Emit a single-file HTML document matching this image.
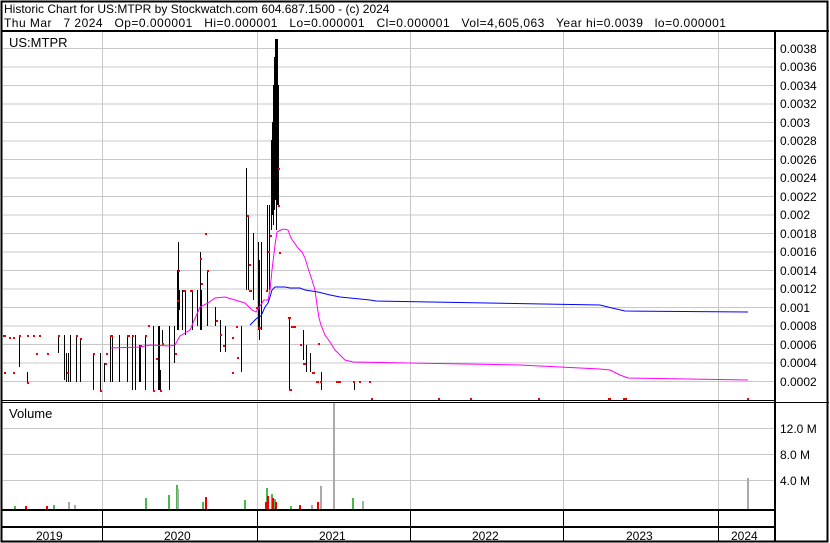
<!DOCTYPE html>
<html><head><meta charset="utf-8"><style>
html,body{margin:0;padding:0;background:#fff}
svg{display:block}
text{font-family:"Liberation Sans",Arial,sans-serif;font-size:12px;fill:#000}
.c{shape-rendering:crispEdges}
</style></head><body>
<svg width="830" height="543" viewBox="0 0 830 543" xmlns="http://www.w3.org/2000/svg">
<rect x="0" y="0" width="830" height="543" fill="#fff"/>
<g stroke="#c8c8c8" stroke-width="1" class="c">
<line x1="102.5" y1="32" x2="102.5" y2="509"/>
<line x1="257.5" y1="32" x2="257.5" y2="509"/>
<line x1="410.5" y1="32" x2="410.5" y2="509"/>
<line x1="563.5" y1="32" x2="563.5" y2="509"/>
<line x1="718.5" y1="32" x2="718.5" y2="509"/>
<line x1="3" y1="48.5" x2="774" y2="48.5"/><line x1="3" y1="67" x2="774" y2="67"/>
<line x1="3" y1="85.5" x2="774" y2="85.5"/><line x1="3" y1="104" x2="774" y2="104"/>
<line x1="3" y1="122.5" x2="774" y2="122.5"/><line x1="3" y1="141" x2="774" y2="141"/>
<line x1="3" y1="159.5" x2="774" y2="159.5"/><line x1="3" y1="178" x2="774" y2="178"/>
<line x1="3" y1="196.5" x2="774" y2="196.5"/><line x1="3" y1="215" x2="774" y2="215"/>
<line x1="3" y1="233.5" x2="774" y2="233.5"/><line x1="3" y1="252" x2="774" y2="252"/>
<line x1="3" y1="270.5" x2="774" y2="270.5"/><line x1="3" y1="289" x2="774" y2="289"/>
<line x1="3" y1="307.5" x2="774" y2="307.5"/><line x1="3" y1="326" x2="774" y2="326"/>
<line x1="3" y1="344.5" x2="774" y2="344.5"/><line x1="3" y1="363" x2="774" y2="363"/>
<line x1="3" y1="381.5" x2="774" y2="381.5"/>
<line x1="3" y1="428.5" x2="774" y2="428.5"/><line x1="3" y1="454.5" x2="774" y2="454.5"/>
<line x1="3" y1="480.5" x2="774" y2="480.5"/>
</g>
<g stroke="#000" stroke-width="1" class="c">
<line x1="19.5" y1="335" x2="19.5" y2="367"/><line x1="27.5" y1="372" x2="27.5" y2="382"/>
<line x1="58.5" y1="335" x2="58.5" y2="353"/><line x1="64.5" y1="335" x2="64.5" y2="380"/>
<line x1="66.5" y1="353" x2="66.5" y2="382"/><line x1="68.5" y1="353" x2="68.5" y2="382"/>
<line x1="70.5" y1="335" x2="70.5" y2="382"/><line x1="76.5" y1="335" x2="76.5" y2="382"/>
<line x1="80.5" y1="338" x2="80.5" y2="382"/><line x1="93.5" y1="353" x2="93.5" y2="390"/>
<line x1="100.5" y1="353" x2="100.5" y2="390"/><line x1="104.5" y1="363" x2="104.5" y2="382"/>
<line x1="110.5" y1="335" x2="110.5" y2="382"/><line x1="112.5" y1="335" x2="112.5" y2="382"/>
<line x1="119.5" y1="335" x2="119.5" y2="382"/><line x1="127.5" y1="335" x2="127.5" y2="382"/>
<line x1="132.5" y1="335" x2="132.5" y2="390"/><line x1="135.5" y1="335" x2="135.5" y2="390"/>
<line x1="139.5" y1="345" x2="139.5" y2="382"/><line x1="140.5" y1="345" x2="140.5" y2="382"/>
<line x1="145.5" y1="335" x2="145.5" y2="390"/><line x1="153.5" y1="326" x2="153.5" y2="390"/>
<line x1="158.5" y1="326" x2="158.5" y2="390"/><line x1="159.5" y1="326" x2="159.5" y2="390"/>
<line x1="160.5" y1="370" x2="160.5" y2="390"/><line x1="162.5" y1="330" x2="162.5" y2="345"/>
<line x1="169.5" y1="326" x2="169.5" y2="390"/><line x1="174.5" y1="326" x2="174.5" y2="363"/>
<line x1="177.5" y1="270" x2="177.5" y2="330"/><line x1="178.5" y1="242" x2="178.5" y2="330"/>
<line x1="179.5" y1="290" x2="179.5" y2="310"/><line x1="182.5" y1="290" x2="182.5" y2="330"/>
<line x1="185.5" y1="290" x2="185.5" y2="335"/><line x1="192.5" y1="290" x2="192.5" y2="330"/>
<line x1="197.5" y1="290" x2="197.5" y2="326"/><line x1="200.5" y1="252" x2="200.5" y2="330"/>
<line x1="201.5" y1="290" x2="201.5" y2="330"/><line x1="207.5" y1="270" x2="207.5" y2="326"/>
<line x1="215.5" y1="307" x2="215.5" y2="326"/><line x1="220.5" y1="320" x2="220.5" y2="352"/>
<line x1="225.5" y1="326" x2="225.5" y2="352"/><line x1="241.5" y1="326" x2="241.5" y2="372"/>
<line x1="246.5" y1="168" x2="246.5" y2="290"/><line x1="248.5" y1="215" x2="248.5" y2="290"/>
<line x1="253.5" y1="233" x2="253.5" y2="300"/><line x1="258.5" y1="242" x2="258.5" y2="330"/>
<line x1="259.5" y1="260" x2="259.5" y2="340"/><line x1="261.5" y1="242" x2="261.5" y2="330"/>
<line x1="267.5" y1="205" x2="267.5" y2="290"/><line x1="269.5" y1="205" x2="269.5" y2="290"/>
<line x1="271.5" y1="140" x2="271.5" y2="230"/><line x1="272.5" y1="122" x2="272.5" y2="215"/>
<line x1="273.5" y1="85" x2="273.5" y2="225"/><line x1="274.5" y1="57" x2="274.5" y2="210"/>
<line x1="275.5" y1="39" x2="275.5" y2="200"/><line x1="276.5" y1="39" x2="276.5" y2="230"/>
<line x1="277.5" y1="39" x2="277.5" y2="205"/><line x1="278.5" y1="85" x2="278.5" y2="205"/>
<line x1="289.5" y1="318" x2="289.5" y2="390"/><line x1="303.5" y1="330" x2="303.5" y2="360"/>
<line x1="306.5" y1="345" x2="306.5" y2="372"/><line x1="310.5" y1="353" x2="310.5" y2="372"/>
<line x1="321.5" y1="372" x2="321.5" y2="390"/><line x1="354.5" y1="382" x2="354.5" y2="390"/>
</g>
<g fill="#e00" class="c">
<rect x="3" y="335" width="3" height="2"/><rect x="9" y="337" width="2" height="2"/><rect x="13" y="337" width="2" height="2"/>
<rect x="4" y="372" width="2" height="2"/><rect x="13" y="372" width="2" height="2"/>
<rect x="27" y="382" width="2" height="2"/><rect x="36" y="353" width="2" height="2"/><rect x="47" y="353" width="2" height="2"/>
<rect x="19" y="335" width="2" height="2"/><rect x="27" y="335" width="2" height="2"/><rect x="33" y="335" width="2" height="2"/><rect x="39" y="335" width="2" height="2"/>
<rect x="58" y="335" width="2" height="2"/><rect x="67" y="372" width="2" height="2"/><rect x="76" y="335" width="2" height="2"/><rect x="80" y="338" width="2" height="2"/>
<rect x="93" y="353" width="2" height="2"/><rect x="100" y="390" width="2" height="2"/><rect x="105" y="363" width="2" height="2"/><rect x="106" y="353" width="2" height="2"/>
<rect x="110" y="335" width="3" height="2"/><rect x="127" y="335" width="3" height="2"/><rect x="132" y="335" width="2" height="2"/><rect x="140" y="345" width="2" height="2"/>
<rect x="145" y="335" width="2" height="2"/><rect x="148" y="325" width="2" height="2"/><rect x="156" y="358" width="2" height="2"/><rect x="153" y="390" width="2" height="2"/>
<rect x="160" y="390" width="2" height="2"/><rect x="162" y="343" width="2" height="2"/><rect x="175" y="353" width="2" height="2"/><rect x="177" y="300" width="2" height="2"/>
<rect x="178" y="270" width="2" height="2"/><rect x="183" y="290" width="3" height="2"/><rect x="190" y="290" width="3" height="2"/><rect x="200" y="258" width="2" height="2"/>
<rect x="201" y="283" width="2" height="2"/><rect x="205" y="233" width="2" height="2"/><rect x="207" y="270" width="2" height="2"/><rect x="216" y="320" width="2" height="2"/>
<rect x="220" y="334" width="2" height="2"/><rect x="223" y="345" width="2" height="2"/><rect x="232" y="337" width="2" height="2"/><rect x="236" y="326" width="2" height="2"/>
<rect x="237" y="357" width="2" height="2"/><rect x="232" y="372" width="2" height="2"/><rect x="247" y="215" width="2" height="2"/><rect x="249" y="264" width="2" height="2"/>
<rect x="249" y="290" width="3" height="2"/><rect x="256" y="307" width="2" height="2"/><rect x="258" y="327" width="3" height="2"/><rect x="266" y="290" width="2" height="2"/>
<rect x="268" y="251" width="2" height="2"/><rect x="270" y="235" width="2" height="2"/><rect x="278" y="168" width="2" height="2"/><rect x="278" y="205" width="2" height="2"/>
<rect x="279" y="252" width="2" height="2"/><rect x="288" y="317" width="3" height="2"/><rect x="289" y="389" width="3" height="2"/><rect x="291" y="326" width="5" height="2"/>
<rect x="300" y="344" width="2" height="2"/><rect x="303" y="363" width="3" height="2"/><rect x="312" y="372" width="3" height="2"/><rect x="316" y="381" width="3" height="2"/>
<rect x="318" y="343" width="2" height="2"/><rect x="320" y="381" width="2" height="2"/><rect x="336" y="381" width="3" height="2"/><rect x="339" y="381" width="2" height="2"/>
<rect x="353" y="381" width="2" height="2"/><rect x="359" y="381" width="2" height="2"/><rect x="369" y="381" width="2" height="2"/><rect x="371" y="398" width="2" height="2"/>
<rect x="438" y="398" width="2" height="2"/><rect x="470" y="398" width="2" height="2"/><rect x="538" y="398" width="2" height="2"/><rect x="608" y="398" width="3" height="2"/><rect x="623" y="398" width="4" height="2"/><rect x="747" y="398" width="2" height="2"/>
</g>
<polyline fill="none" stroke="#f0f" stroke-width="1" points="111,348 140,347 150,345 170,346 175,345 180,336 190,330 200,307 208,303 215,298 225,297 235,300 245,303 252,310 256,312 260,306 264,300 268,300 270,290 272,270 275,245 277,232 283,229 288,230 291,238 298,248 302,252 305,258 308,268 312,280 315,290 317,305 319,318 321,325 325,335 330,342 335,350 340,355 345,360 353,362 520,365 600,369 610,370 620,375 628,378 748,380"/>
<polyline fill="none" stroke="#00f" stroke-width="1" points="250,325 253,322 257,318 261,316 265,307 268,303 270,297 272,290 275,287 285,287 290,288 300,288 305,290 318,292 330,295 340,297 350,298 360,299 370,300 376,301 600,305 612,308 625,311 748,312"/>
<g fill="#4cb74c" class="c">
<rect x="14" y="506" width="2" height="4"/><rect x="53" y="505" width="2" height="5"/><rect x="145" y="498" width="2" height="12"/><rect x="168" y="495" width="2" height="15"/>
<rect x="176" y="485" width="2" height="25"/><rect x="202" y="502" width="2" height="8"/><rect x="244" y="500" width="2" height="10"/><rect x="266" y="488" width="2" height="22"/>
<rect x="271" y="494" width="2" height="16"/><rect x="274" y="499" width="2" height="11"/><rect x="290" y="506" width="2" height="4"/><rect x="352" y="498" width="2" height="12"/>
</g>
<g fill="#e00" class="c">
<rect x="25" y="506" width="2" height="4"/><rect x="46" y="506" width="2" height="4"/><rect x="205" y="497" width="2" height="13"/><rect x="265" y="502" width="2" height="8"/>
<rect x="267" y="496" width="2" height="14"/><rect x="272" y="498" width="2" height="12"/><rect x="275" y="502" width="2" height="8"/><rect x="299" y="505" width="2" height="5"/><rect x="317" y="502" width="2" height="8"/>
</g>
<g fill="#aaa" class="c">
<rect x="68" y="502" width="2" height="8"/><rect x="74" y="505" width="2" height="5"/><rect x="177" y="489" width="2" height="21"/><rect x="311" y="505" width="2" height="5"/>
<rect x="320" y="486" width="2" height="24"/><rect x="333" y="402" width="2" height="108"/><rect x="362" y="501" width="2" height="9"/><rect x="747" y="478" width="2" height="32"/>
</g>
<g stroke="#000" fill="none" class="c">
<rect x="1.5" y="1.5" width="826" height="540" stroke-width="2"/>
<line x1="1" y1="31" x2="829" y2="31" stroke-width="2"/>
<line x1="775" y1="31" x2="775" y2="542" stroke-width="2"/>
<line x1="2" y1="400.5" x2="775" y2="400.5" stroke-width="1"/>
<line x1="2" y1="402.5" x2="829" y2="402.5" stroke-width="1"/>
<line x1="2" y1="510" x2="775" y2="510" stroke-width="2"/>
<line x1="2" y1="527" x2="775" y2="527" stroke-width="2"/>
<g stroke-width="1">
<line x1="102.5" y1="510" x2="102.5" y2="542"/><line x1="257.5" y1="510" x2="257.5" y2="542"/>
<line x1="410.5" y1="510" x2="410.5" y2="542"/><line x1="563.5" y1="510" x2="563.5" y2="542"/>
<line x1="718.5" y1="510" x2="718.5" y2="542"/>
</g>
</g>
<text x="4" y="13">Historic Chart for US:MTPR by Stockwatch.com 604.687.1500 - (c) 2024</text>
<text x="4" y="27" xml:space="preserve" textLength="722" lengthAdjust="spacing">Thu Mar   7 2024   Op=0.000001   Hi=0.000001   Lo=0.000001   Cl=0.000001   Vol=4,605,063   Year hi=0.0039   lo=0.000001</text>
<text x="9" y="47" style="font-size:13px">US:MTPR</text>
<text x="9" y="418" style="font-size:13px">Volume</text>
<g>
<text x="780" y="53">0.0038</text><text x="780" y="71">0.0036</text><text x="780" y="90">0.0034</text>
<text x="780" y="108">0.0032</text><text x="780" y="127">0.003</text><text x="780" y="145">0.0028</text>
<text x="780" y="164">0.0026</text><text x="780" y="182">0.0024</text><text x="780" y="201">0.0022</text>
<text x="780" y="219">0.002</text><text x="780" y="238">0.0018</text><text x="780" y="256">0.0016</text>
<text x="780" y="275">0.0014</text><text x="780" y="293">0.0012</text><text x="780" y="312">0.001</text>
<text x="780" y="330">0.0008</text><text x="780" y="349">0.0006</text><text x="780" y="367">0.0004</text>
<text x="780" y="386">0.0002</text>
<text x="780" y="433">12.0 M</text><text x="780" y="459">8.0 M</text><text x="780" y="485">4.0 M</text>
</g>
<text x="36" y="540">2019</text><text x="164" y="540">2020</text><text x="319" y="540">2021</text>
<text x="472" y="540">2022</text><text x="626" y="540">2023</text><text x="731" y="540">2024</text>
</svg>
</body></html>
